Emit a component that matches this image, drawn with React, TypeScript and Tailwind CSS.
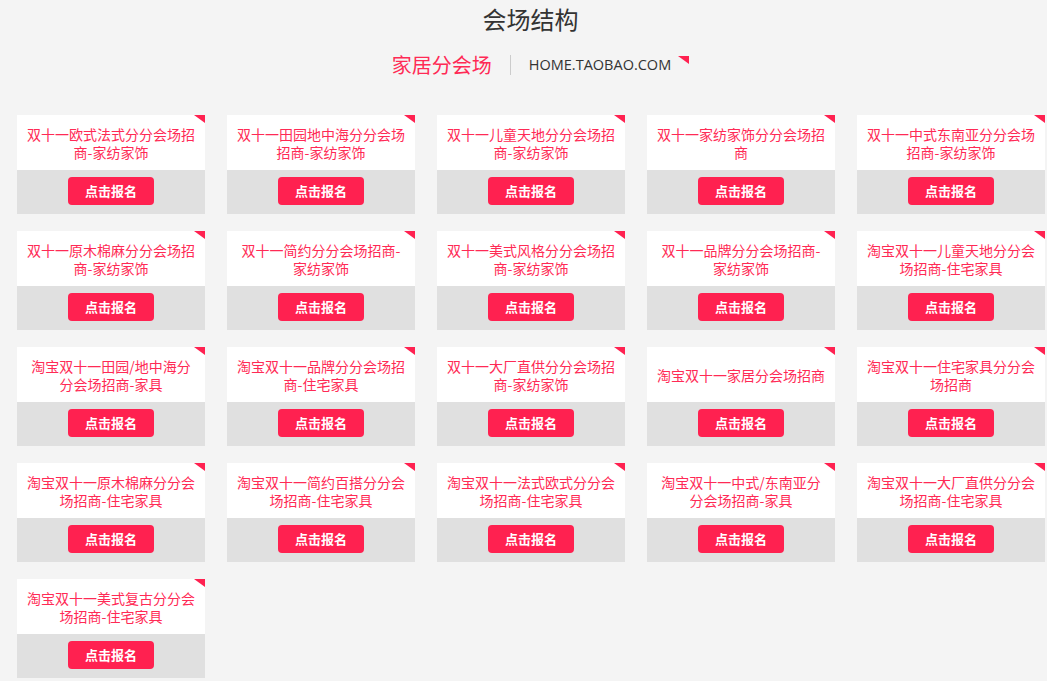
import React from 'react';

const venues: string[] = [
  '双十一欧式法式分分会场招商-家纺家饰',
  '双十一田园地中海分分会场招商-家纺家饰',
  '双十一儿童天地分分会场招商-家纺家饰',
  '双十一家纺家饰分分会场招商',
  '双十一中式东南亚分分会场招商-家纺家饰',
  '双十一原木棉麻分分会场招商-家纺家饰',
  '双十一简约分分会场招商-家纺家饰',
  '双十一美式风格分分会场招商-家纺家饰',
  '双十一品牌分分会场招商-家纺家饰',
  '淘宝双十一儿童天地分分会场招商-住宅家具',
  '淘宝双十一田园/地中海分分会场招商-家具',
  '淘宝双十一品牌分分会场招商-住宅家具',
  '双十一大厂直供分分会场招商-家纺家饰',
  '淘宝双十一家居分会场招商',
  '淘宝双十一住宅家具分分会场招商',
  '淘宝双十一原木棉麻分分会场招商-住宅家具',
  '淘宝双十一简约百搭分分会场招商-住宅家具',
  '淘宝双十一法式欧式分分会场招商-住宅家具',
  '淘宝双十一中式/东南亚分分会场招商-家具',
  '淘宝双十一大厂直供分分会场招商-住宅家具',
  '淘宝双十一美式复古分分会场招商-住宅家具',
];

function Corner({ className = '' }: { className?: string }) {
  return (
    <svg className={className} width="11" height="8" viewBox="0 0 11 8">
      <polygon points="0,0 11,0 11,8" fill="#ff2150" />
    </svg>
  );
}

function VenueCard({ name }: { name: string }) {
  return (
    <div className="flex flex-col">
      <div className="relative bg-white h-[55px] flex items-center justify-center px-[8px]">
        <Corner className="absolute top-0 right-0" />
        <p className="text-[14px] leading-[18px] text-[#ff2a55] text-center">{name}</p>
      </div>
      <div className="bg-[#e0e0e0] h-[44px] flex justify-center pt-[7px]">
        <button className="w-[86px] h-[28px] rounded-[4px] bg-[#ff2150] text-white text-[13px] font-bold">
          点击报名
        </button>
      </div>
    </div>
  );
}

export default function App() {
  return (
    <div
      className="min-h-[681px] bg-[#f4f4f4]"
      style={{ fontFamily: '"Noto Sans CJK SC", "Noto Sans", sans-serif' }}
    >
      <h1 className="pt-[2px] pl-[14px] text-center text-[24px] leading-[34px] text-[#333]">会场结构</h1>
      <div className="mt-[16px] flex items-center justify-center pl-[34px]">
        <span className="text-[20px] leading-[26px] text-[#ff2a55]">家居分会场</span>
        <span className="mx-[18px] h-[20px] w-px bg-[#cccccc]" />
        <span
          className="text-[14.5px] leading-[20px] text-[#333]"
          style={{ fontFamily: '"Open Sans", "Noto Sans", sans-serif' }}
        >
          HOME.TAOBAO.COM
        </span>
        <Corner className="ml-[7px] self-start mt-[4px]" />
      </div>
      <div className="mt-[37px] grid grid-cols-[repeat(5,188px)] gap-x-[22px] gap-y-[17px] pl-[17px]">
        {venues.map((v, i) => (
          <VenueCard key={i} name={v} />
        ))}
      </div>
    </div>
  );
}
